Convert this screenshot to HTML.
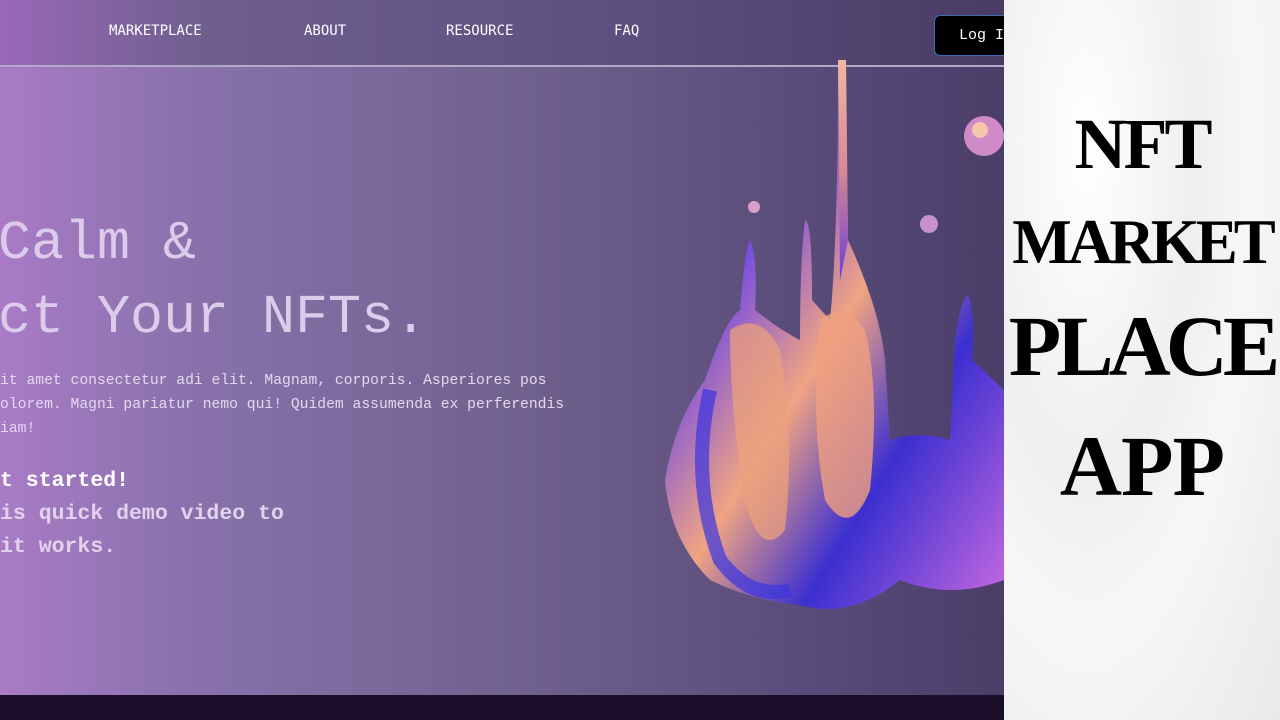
<!DOCTYPE html>
<html><head><meta charset="utf-8"><style>
html,body{margin:0;padding:0;width:1280px;height:720px;overflow:hidden;font-family:"Liberation Mono",monospace}
.main{position:absolute;left:0;top:0;width:1004px;height:695px;background:linear-gradient(90deg,#a97bc6 0%,#8a72ad 18%,#71628f 50%,#5a4c7a 80%,#4a3d68 100%)}
.nav{position:absolute;left:0;top:0;width:1004px;height:65px;background:linear-gradient(90deg,#9a68b8 0%,#6f5f8e 20%,#5d5080 60%,#483c65 100%);border-bottom:2px solid #b3a8c8}
.nav a{position:absolute;top:23px;color:#fff;font-size:14px;font-family:"DejaVu Sans Mono",monospace;text-decoration:none}
.btn{position:absolute;left:934px;top:15px;width:90px;height:41px;background:#000;border:1px solid #3d6db0;border-radius:6px;color:#fff;font-size:15px;box-sizing:border-box;padding:11px 0 0 24px}
.h{position:absolute;left:0;color:#dccbea;font-size:55px;white-space:nowrap}
.p{position:absolute;left:0;top:369px;color:#e6d8ef;font-size:14.7px;line-height:24px;white-space:pre}
.b{position:absolute;left:0;top:465px;color:#e3d2ee;font-size:21.5px;font-weight:bold;line-height:33px;white-space:pre}
.foot{position:absolute;left:0;top:695px;width:1004px;height:25px;background:#1a0e2a}
.paper{position:absolute;left:1004px;top:0;width:276px;height:720px;background:radial-gradient(ellipse at 30% 20%,#fff,#eeeff0 40%,#f7f7f8 60%,#e8e9ea 100%)}
.t{position:absolute;left:0;width:276px;text-align:center;font-family:"Liberation Serif",serif;font-weight:bold;color:#000;white-space:nowrap}
</style></head><body>
<div class="main"></div>
<div class="nav">
<a style="left:109px">MARKETPLACE</a><a style="left:304px">ABOUT</a><a style="left:446px">RESOURCE</a><a style="left:614px">FAQ</a>
</div>
<div class="btn">Log In</div>
<div class="h" style="top:212px;left:-2px">Calm &amp;</div>
<div class="h" style="top:286px;left:-2px">ct Your NFTs.</div>
<div class="p">it amet consectetur adi elit. Magnam, corporis. Asperiores pos
olorem. Magni pariatur nemo qui! Quidem assumenda ex perferendis
iam!</div>
<div class="b"><span style="color:#fff">t started!</span>
is quick demo video to
it works.</div>
<svg style="position:absolute;left:650px;top:60px" width="354" height="560" viewBox="0 0 354 560">
<defs>
<linearGradient id="g" x1="0" y1="0" x2="1" y2="1">
<stop offset="0" stop-color="#e9a07a"/><stop offset=".3" stop-color="#7a4fe0"/><stop offset=".5" stop-color="#f0a482"/><stop offset=".7" stop-color="#3b2fd0"/><stop offset="1" stop-color="#c86ae0"/>
</linearGradient>
<linearGradient id="g2" x1="0" y1="0" x2="0" y2="1">
<stop offset="0" stop-color="#f3b7a0"/><stop offset=".5" stop-color="#d68a90"/><stop offset="1" stop-color="#6b3cd8"/>
</linearGradient>
</defs>
<path d="M188 0 L196 0 L198 180 Q230 250 235 300 L240 380 Q270 370 300 380 L305 280 Q310 240 318 235 Q325 250 322 300 L354 330 L354 520 Q300 540 250 520 Q200 560 150 545 Q100 540 60 520 Q20 480 15 420 Q25 360 55 320 Q75 260 90 250 Q95 190 100 180 Q108 200 105 250 Q130 270 150 280 Q150 200 155 160 Q162 160 162 240 L180 260 Q188 180 188 0 Z" fill="url(#g)"/>
<path d="M170 260 Q195 240 215 270 Q230 330 220 430 Q200 480 175 440 Q160 360 170 260Z" fill="#f0a080" opacity=".8"/>
<path d="M80 270 Q110 250 130 290 Q145 380 135 470 Q110 500 95 440 Q80 350 80 270Z" fill="#eba07c" opacity=".75"/>
<path d="M60 330 Q40 420 70 500 Q100 540 140 530" stroke="#3a34e0" stroke-width="14" fill="none" opacity=".7"/>
<path d="M188 0 L196 0 L198 180 L190 220 Z" fill="url(#g2)"/>
<circle cx="334" cy="76" r="20" fill="#d08ac8"/><circle cx="330" cy="70" r="8" fill="#f5c6a8"/>
<circle cx="279" cy="164" r="9" fill="#c890d0"/>
<circle cx="104" cy="147" r="6" fill="#d8a0c8"/>
</svg>
<div class="foot"></div>
<div class="paper">
<div class="t" style="top:103px;font-size:72px;letter-spacing:-3px">NFT</div>
<div class="t" style="top:206px;font-size:63px;letter-spacing:-4px">MARKET</div>
<div class="t" style="top:296px;font-size:86px;letter-spacing:-5px">PLACE</div>
<div class="t" style="top:416px;font-size:86px;letter-spacing:-1px">APP</div>
</div>
</body></html>
